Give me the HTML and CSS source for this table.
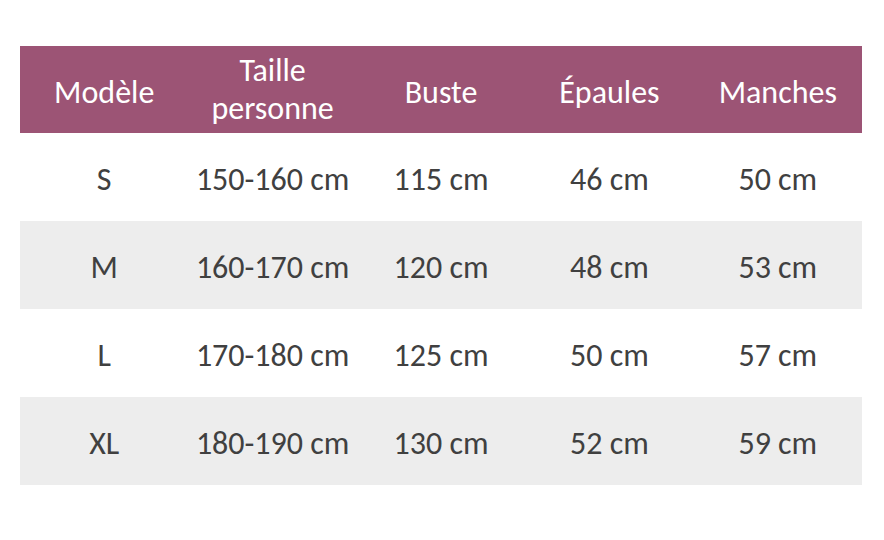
FILE: index.html
```html
<!DOCTYPE html>
<html lang="fr">
<head>
<meta charset="utf-8">
<title>Guide des tailles</title>
<link rel="stylesheet" href="styles.css">
</head>
<body>
<div class="size-table">
  <div class="row head">
    <div class="cell">Modèle</div>
    <div class="cell two-line">Taille<br>personne</div>
    <div class="cell">Buste</div>
    <div class="cell">Épaules</div>
    <div class="cell">Manches</div>
  </div>
  <div class="row">
    <div class="cell">S</div>
    <div class="cell">150-160 cm</div>
    <div class="cell">115 cm</div>
    <div class="cell">46 cm</div>
    <div class="cell">50 cm</div>
  </div>
  <div class="row alt">
    <div class="cell">M</div>
    <div class="cell">160-170 cm</div>
    <div class="cell">120 cm</div>
    <div class="cell">48 cm</div>
    <div class="cell">53 cm</div>
  </div>
  <div class="row">
    <div class="cell">L</div>
    <div class="cell">170-180 cm</div>
    <div class="cell">125 cm</div>
    <div class="cell">50 cm</div>
    <div class="cell">57 cm</div>
  </div>
  <div class="row alt last">
    <div class="cell">XL</div>
    <div class="cell">180-190 cm</div>
    <div class="cell">130 cm</div>
    <div class="cell">52 cm</div>
    <div class="cell">59 cm</div>
  </div>
</div>
</body>
</html>
```
FILE: styles.css
```css
html, body {
  margin: 0;
  padding: 0;
  background: #ffffff;
}

body {
  padding: 46px 22px 0 20px;
  font-family: "Carlito", "Calibri", "Open Sans", "Liberation Sans", sans-serif;
  font-size: 32px;
  color: #404040;
}

.size-table {
  width: 842px;
  display: flex;
  flex-direction: column;
}

.row {
  display: grid;
  grid-template-columns: repeat(5, 1fr);
  height: 88px;
}

.row.head {
  height: 87px;
  background: #9c5475;
  color: #ffffff;
}

.row.alt {
  background: #ededed;
}

.row.last .cell:last-child {
  box-shadow: 0 2px 0 #ededed;
}

.cell {
  display: flex;
  align-items: center;
  justify-content: center;
  text-align: center;
  line-height: 38px;
  padding-top: 6px;
  box-sizing: border-box;
}

.cell.two-line {
  padding-top: 0;
}
```
